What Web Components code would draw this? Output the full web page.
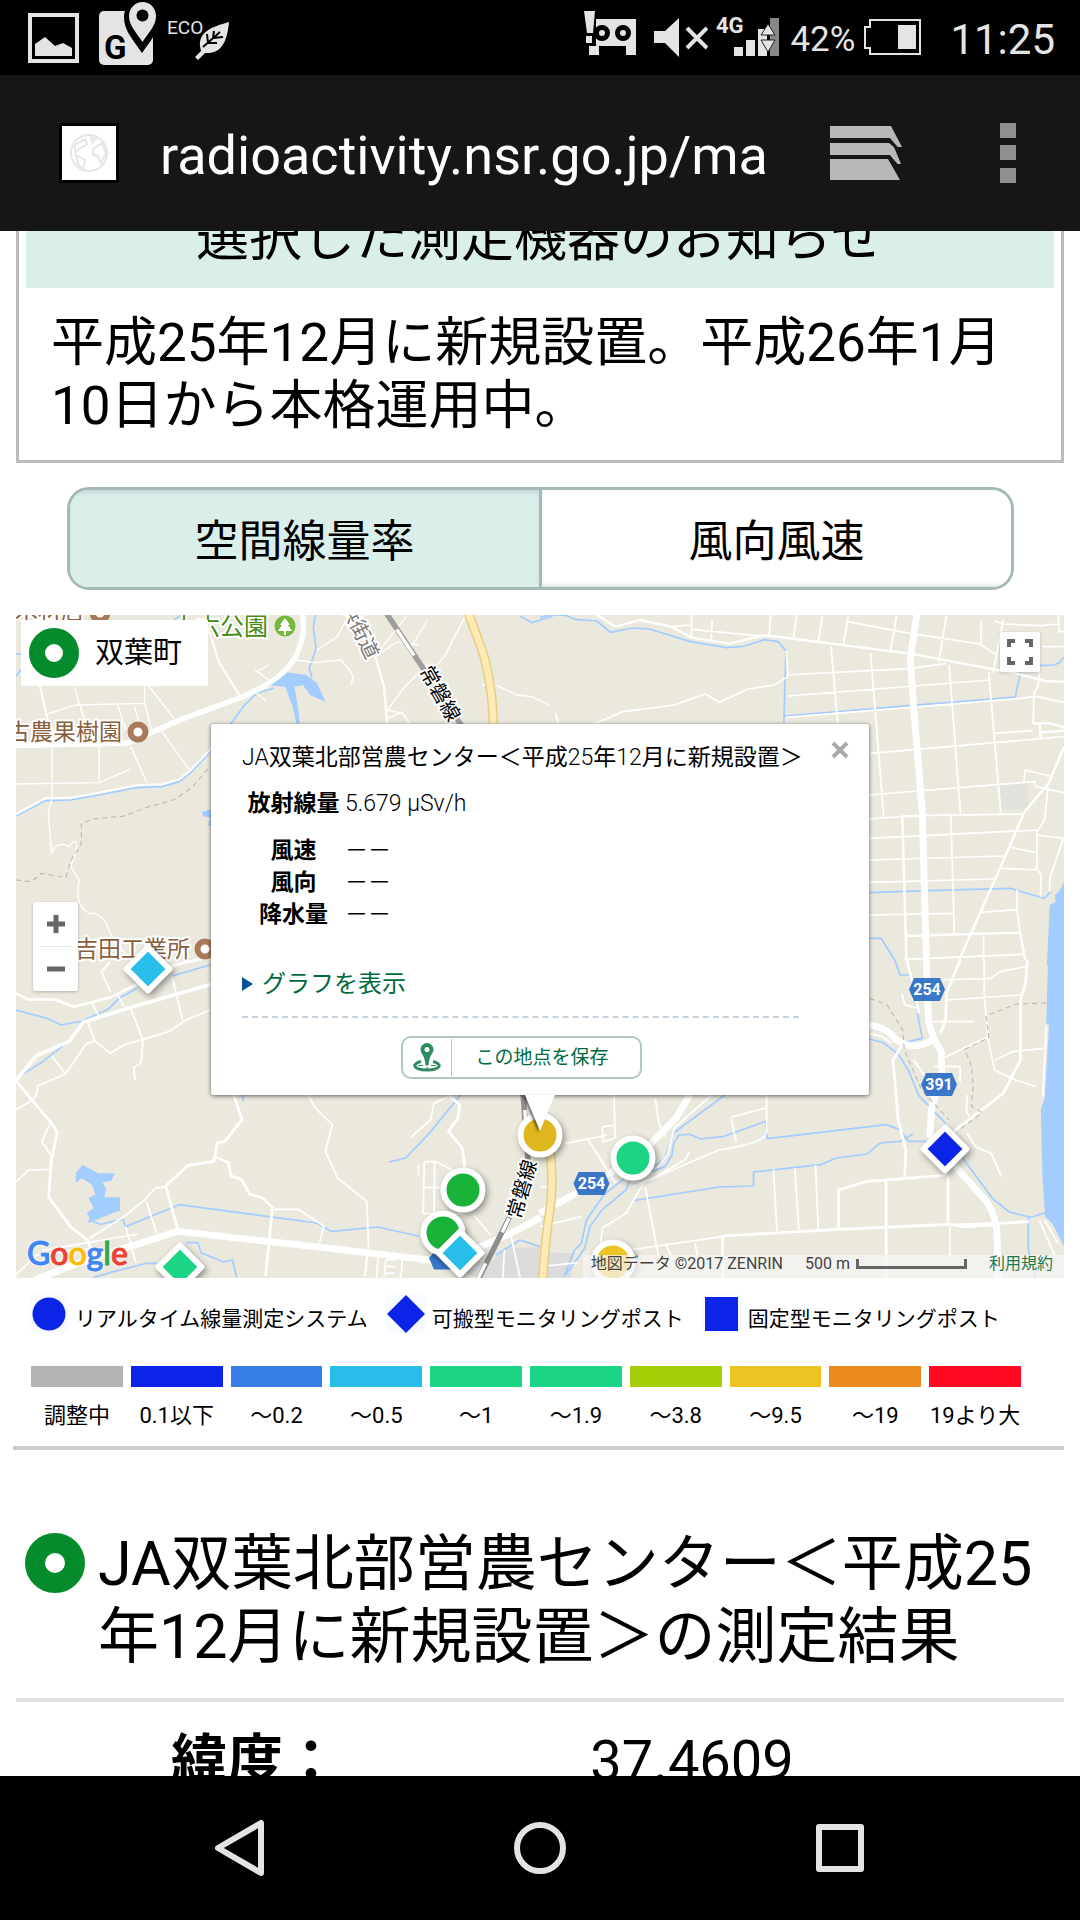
<!DOCTYPE html>
<html lang="ja">
<head>
<meta charset="utf-8">
<meta name="viewport" content="width=device-width, initial-scale=1">
<title>radioactivity.nsr.go.jp</title>
<style>
    html, body {
        margin: 0;
        height: 100%;
    }

    body {
        display: flex;
        flex-direction: column;
        overflow: hidden;
        background: #fff;
        color: #000;
        font-family: Roboto, "Noto Sans CJK JP", sans-serif;
    }

    main {
        flex: 1;
        min-height: 0;
        overflow: hidden;
    }

    .page {
        margin-top: -53px;
        padding: 0 16px;
    }
</style>
</head>
<body>
    <status-bar></status-bar>
    <browser-bar>radioactivity.nsr.go.jp/ma</browser-bar>
    <main>
        <div class="page">
            <notice-box>
                <span slot="title">選択した測定機器のお知らせ</span>
                平成25年12月に新規設置。平成26年1月10日から本格運用中。
            </notice-box>
            <view-tabs></view-tabs>
            <dose-map>
                <map-pin shape="circle" color="#ecc424" slot="pins" style="--x: 73px; --y: 647px"></map-pin>
                <map-pin shape="circle" color="#deb620" slot="pins" style="--x: 0px; --y: 520px"></map-pin>
                <map-pin shape="circle" color="#1bd584" slot="pins" style="--x: 93px; --y: 543px"></map-pin>
                <map-pin shape="circle" color="#1ab33a" slot="pins" style="--x: -77px; --y: 575px"></map-pin>
                <map-pin shape="circle" color="#1ab33a" slot="pins" style="--x: -97px; --y: 618px"></map-pin>
                <map-pin shape="diamond" color="#27bfea" slot="pins" style="--x: -80px; --y: 638px"></map-pin>
                <map-pin shape="diamond" color="#27bfea" slot="pins" style="--x: -392px; --y: 354px"></map-pin>
                <map-pin shape="diamond" color="#1bd584" slot="pins" style="--x: -360px; --y: 652px"></map-pin>
                <map-pin shape="diamond" color="#0c24e6" slot="pins" style="--x: 405px; --y: 534px"></map-pin>
                <map-popup slot="popup">JA双葉北部営農センター＜平成25年12月に新規設置＞</map-popup>
            </dose-map>
            <map-legend></map-legend>
            <station-heading>JA双葉北部営農センター＜平成25年12月に新規設置＞の測定結果</station-heading>
            <station-facts></station-facts>
        </div>
    </main>
    <nav-bar></nav-bar>

<script>
class StatusBar extends HTMLElement {
    constructor() {
        super();
        this.attachShadow({ mode: 'open' });
        this.shadowRoot.innerHTML = `
            <style>
                :host {
                    display: flex;
                    justify-content: space-between;
                    height: 75px;
                    padding: 0 25px 0 28px;
                    background: #000;
                    color: #e4e4e4;
                    flex: none;
                }

                .side {
                    display: flex;
                    align-items: center;
                }

                svg { display: block; fill: #e4e4e4; }
                .left { gap: 12px; }
                .gallery { margin-right: 8px; }
                .mute { margin: 0 8px 0 18px; }
                .percent { font-size: 35px; margin: 4px 8px 0 11px; }
                .clock { font-size: 42px; margin: 4px 0 0 29px; }
                text { font-family: Roboto, sans-serif; }
            </style>
            <div class="side left">
                <svg class="gallery" width="51" height="75" viewBox="28 0 51 75">
                    <rect x="30" y="15" width="47" height="46" fill="none" stroke="#e4e4e4" stroke-width="4"/>
                    <path d="M35 56V44l10-7 10 9 8-3 9 5v8z"/>
                </svg>
                <svg width="57" height="75" viewBox="99 0 57 75">
                    <rect x="99" y="11" width="54" height="54" rx="5"/>
                    <path d="M142-2c-10 0-18 9-18 19 0 12 6 19 18 36 12-17 18-24 18-36 0-10-8-19-18-19z" fill="#000"/>
                    <path d="M142.500 2c-7 0-13.500 6-13.500 14 0 9 6 15 13.500 26 7.500-11 13.500-17 13.500-26 0-8-6-14-13.500-14z"/>
                    <circle cx="142.500" cy="15.500" r="6" fill="#000"/>
                    <text x="104" y="59" font-size="33" font-weight="700" fill="#000">G</text>
                </svg>
                <svg width="62" height="75" viewBox="168 0 62 75">
                    <text x="167" y="34" font-size="19">ECO</text>
                    <path d="M229 22c-18 5-30 10-29 24l1 5-6 6 3 3 7-7c16 1 22-10 24-31z"/>
                    <path d="M203 47l17-15M208 43l-1-9M213 38l1-7M208 43l9 0M213 38l10-1" fill="none" stroke="#000" stroke-width="2"/>
                </svg>
            </div>
            <div class="side">
                <svg width="52" height="75" viewBox="584 0 52 75">
                    <path d="M584 11h11l-2 22h-6zM586 36h6v7h-6zM596 19h40v36h-10v-9h-27v9h-10v-9h7z"/>
                    <circle cx="602" cy="33" r="5.500" stroke="#000" stroke-width="5"/>
                    <circle cx="623" cy="33" r="5.500" stroke="#000" stroke-width="5"/>
                </svg>
                <svg class="mute" width="54" height="75" viewBox="655 0 54 75">
                    <path d="M655 31h11l14-13v39l-14-14h-11z"/>
                    <path d="M688 28l20 20M708 28l-20 20" stroke="#e4e4e4" stroke-width="4"/>
                </svg>
                <svg width="63" height="75" viewBox="717 0 63 75">
                    <text x="717" y="33" font-size="22" font-weight="700">4G</text>
                    <path d="M735 47h9v9h-9zM747 40h9v16h-9zM759 29h9v27h-9z"/>
                    <path d="M771 18h9v38h-9z" fill="#888"/>
                    <path d="M769 24l7 11h-14zM769 52l7-12h-14z" stroke="#222" stroke-width="1"/>
                </svg>
                <span class="percent">42%</span>
                <svg width="58" height="75" viewBox="864 0 58 75">
                    <path d="M871 20h50v34h-50v-6h-5V27h5z" fill="none" stroke="#e4e4e4" stroke-width="2"/>
                    <path d="M899 25h18v24h-18z"/>
                </svg>
                <span class="clock">11:25</span>
            </div>
        `;
    }
}

class BrowserBar extends HTMLElement {
    constructor() {
        super();
        this.attachShadow({ mode: 'open' });
        this.shadowRoot.innerHTML = `
            <style>
                :host {
                    display: flex;
                    align-items: center;
                    height: 156px;
                    padding: 0 64px 0 59px;
                    box-sizing: border-box;
                    background: #161616;
                    color: #fff;
                    flex: none;
                }

                .favicon {
                    width: 54px;
                    height: 54px;
                    border: 3px solid #000;
                    background: #fff;
                }

                .url {
                    flex: 1;
                    min-width: 0;
                    margin-left: 41px;
                    padding-top: 4px;
                    font-size: 54px;
                    white-space: nowrap;
                    overflow: hidden;
                }

                button {
                    padding: 0;
                    border: 0;
                    background: none;
                }

                .menu { margin-left: 98px; }
                svg { display: block; }
            </style>
            <svg class="favicon" viewBox="0 0 54 54">
                <g fill="none" stroke="#e6e6e6" stroke-width="2">
                    <circle cx="27" cy="27" r="18"/>
                    <path d="M13 19l10-6 2 5-8 5-4 4zM29 11l5 2-4 4zM14 29l9 5-2 10-5-6zM31 23l9-6 4 11-5 9-3-7-5-1z"/>
                </g>
            </svg>
            <div class="url"><slot></slot></div>
            <button aria-label="タブ">
                <svg width="72" height="56" viewBox="829 126 72 56" fill="#b8b8b8">
                    <path d="M829 127h61l11 21h-6l-6-9h-60zM829 144h59l5 4 7 17h-6l-5-9h-60zM829 160h58l12 21h-70z"/>
                    <path d="M829 141.500h60l8 9" fill="none" stroke="#161616" stroke-width="3"/>
                    <path d="M829 157.500h59l8 9" fill="none" stroke="#161616" stroke-width="3"/>
                </svg>
            </button>
            <button class="menu" aria-label="メニュー">
                <svg width="16" height="60" fill="#8f8f8f">
                    <path d="M0 0h16v15H0zM0 22h16v15H0zM0 45h16v15H0z"/>
                </svg>
            </button>
        `;
    }
}

class NoticeBox extends HTMLElement {
    constructor() {
        super();
        this.attachShadow({ mode: 'open' });
        this.shadowRoot.innerHTML = `
            <style>
                :host {
                    display: block;
                    padding: 6px 7px 22px;
                    border: 3px solid #bbb;
                    font-size: 53px;
                    line-height: 63px;
                }

                h2 {
                    margin: 0;
                    padding: 20px 0 18px;
                    background: #dbefea;
                    text-align: center;
                    font-size: 53px;
                    font-weight: 400;
                }

                p {
                    margin: 0;
                    padding: 24px 25px 0;
                }
            </style>
            <h2><slot name="title"></slot></h2>
            <p><slot></slot></p>
        `;
    }
}

class ViewTabs extends HTMLElement {
    constructor() {
        super();
        this.attachShadow({ mode: 'open' });
        this.shadowRoot.innerHTML = `
            <style>
                :host {
                    display: flex;
                    margin: 24px 50px 25px 51px;
                    border: 3px solid #a5b9b7;
                    border-radius: 22px;
                    overflow: hidden;
                }

                button {
                    flex: 1;
                    height: 97px;
                    padding: 0 0 2px;
                    border: 0;
                    background: #fff;
                    color: #000;
                    font: inherit;
                    font-size: 44px;
                    box-shadow: inset 0 -4px 4px -2px #dde3e2;
                }

                button[aria-pressed="true"] {
                    background: #daeeea;
                    box-shadow: inset 0 4px 4px -1px #c4d8d4;
                    border-right: 3px solid #a5b9b7;
                }
            </style>
            <button aria-pressed="true">空間線量率</button>
            <button aria-pressed="false">風向風速</button>
        `;
    }
}

class MapPin extends HTMLElement {
    constructor() {
        super();
        this.attachShadow({ mode: 'open' });
    }

    connectedCallback() {
        const color = this.getAttribute('color');
        const shape = this.getAttribute('shape') === 'circle'
            ? `<circle cx="30" cy="30" r="19.500"/>`
            : `<path d="M30 8.500L51.500 30 30 51.500 8.500 30z"/>`;
        this.shadowRoot.innerHTML = `
            <style>
                :host {
                    position: absolute;
                    left: calc(50% + var(--x) - 30px);
                    top: calc(var(--y) - 30px);
                }

                svg {
                    display: block;
                    filter: drop-shadow(2px 3px 3px rgba(0, 0, 0, 0.4));
                }
            </style>
            <svg width="60" height="60" fill="${color}" stroke="#fff" stroke-width="6" stroke-linejoin="round">${shape}</svg>
        `;
    }
}

class MapPopup extends HTMLElement {
    constructor() {
        super();
        this.attachShadow({ mode: 'open' });
        this.shadowRoot.innerHTML = `
            <style>
                :host {
                    position: absolute;
                    left: calc(50% - 329px);
                    top: 109px;
                    width: 658px;
                    box-sizing: border-box;
                    padding: 18px 70px 16px 31px;
                    background: #fff;
                    border-radius: 3px;
                    box-shadow: 0 1px 4px rgba(0, 0, 0, 0.6);
                    font-family: "Roboto Light", Roboto, "Noto Sans CJK JP", sans-serif;
                    font-size: 23px;
                    line-height: 32px;
                }

                .title { white-space: nowrap; }

                table {
                    margin-top: 14px;
                    border-collapse: collapse;
                }

                th {
                    width: 103px;
                    padding: 0;
                    font-weight: 700;
                    text-align: center;
                }

                td { padding: 0; }
                tr:first-child > * { padding-bottom: 15px; }

                .graph {
                    display: flex;
                    align-items: center;
                    gap: 9px;
                    padding: 37px 0 16px;
                    border-bottom: 2px dashed #c5d2dc;
                    color: #006b3c;
                    font-size: 24px;
                    text-decoration: none;
                }

                .save {
                    display: flex;
                    align-items: center;
                    width: 241px;
                    height: 43px;
                    margin: 18px 0 0 159px;
                    padding: 0;
                    border: 2px solid #b0c8c4;
                    border-radius: 10px;
                    background: #fff;
                    color: #006b3c;
                    font: inherit;
                    font-size: 19px;
                }

                .save svg {
                    border-right: 1px solid #b0c8c4;
                }

                .save span {
                    flex: 1;
                    padding-right: 8px;
                }

                .close {
                    position: absolute;
                    top: 16px;
                    right: 19px;
                    padding: 0;
                    border: 0;
                    background: none;
                }

                .tail {
                    position: absolute;
                    left: 314px;
                    top: 100%;
                    filter: drop-shadow(-2px 1px 1px rgba(0, 0, 0, 0.5));
                }

                svg { display: block; }
            </style>
            <div class="title"><slot></slot></div>
            <table>
                <tr><th scope="row">放射線量</th><td>5.679 μSv/h</td></tr>
                <tr><th scope="row">風速</th><td>－－</td></tr>
                <tr><th scope="row">風向</th><td>－－</td></tr>
                <tr><th scope="row">降水量</th><td>－－</td></tr>
            </table>
            <a class="graph" href="#graph">
                <svg width="11" height="14"><path d="M0 0l11 7-11 7z" fill="#0b4f9e"/></svg>
                グラフを表示
            </a>
            <button class="save">
                <svg width="48" height="37" viewBox="0 0 48 37">
                    <path d="M24 4a6.500 6.500 0 0 0-6.500 6.500c0 4 4.500 6 5 16h3c.5-10 5-12 5-16A6.500 6.500 0 0 0 24 4zm0 4a2.500 2.500 0 1 1 0 5 2.500 2.500 0 0 1 0-5z" fill="#2f8c60" fill-rule="evenodd"/>
                    <g fill="none" stroke="#2f8c60">
                        <path d="M18 22.500c-9 2-9 8 6 8.500 15-.5 15-6.500 6-8.500" stroke-width="3"/>
                        <path d="M15 26.500h5M28 26.500h5M24 28v3" stroke-width="1"/>
                    </g>
                </svg>
                <span>この地点を保存</span>
            </button>
            <button class="close" aria-label="閉じる">
                <svg width="20" height="20"><path d="M3 3l14 14M17 3L3 17" stroke="#aaa" stroke-width="4"/></svg>
            </button>
            <svg class="tail" width="30" height="36"><path d="M0 0h30L15 36z" fill="#fff"/></svg>
        `;
    }
}

class DoseMap extends HTMLElement {
    constructor() {
        super();
        this.attachShadow({ mode: 'open' });
        this.shadowRoot.innerHTML = `
            <style>
                :host {
                    display: block;
                    position: relative;
                    height: 663px;
                    overflow: hidden;
                    background: #ebe9de;
                }

                .ground {
                    display: block;
                    width: 100%;
                    height: 100%;
                }

                .ground text {
                    font-size: 23px;
                    stroke: #fff;
                    stroke-width: 4px;
                    stroke-linejoin: round;
                    paint-order: stroke;
                }

                .ground .shield text {
                    font-size: 16px;
                    font-weight: 700;
                    fill: #fff;
                    stroke: none;
                    text-anchor: middle;
                }

                .road { fill: none; stroke: #fff; stroke-linejoin: round; }
                .water { fill: none; stroke: #a3ccff; stroke-width: 5; stroke-linejoin: round; }
                .lake { fill: #a3ccff; }
                .trail { fill: none; stroke: #bbb3a8; stroke-width: 3; stroke-dasharray: 15 11; }

                .area, .zoom, .full, .google, .credits {
                    position: absolute;
                }

                .area {
                    left: 5px;
                    top: 5px;
                    display: flex;
                    align-items: center;
                    gap: 16px;
                    height: 66px;
                    padding: 0 26px 0 8px;
                    background: #fff;
                    font-size: 29px;
                    line-height: 62px;
                }

                .zoom {
                    left: 17px;
                    top: 287px;
                    width: 45px;
                    background: #fff;
                    border-radius: 2px;
                    box-shadow: 0 1px 3px rgba(0, 0, 0, 0.25);
                }

                .zoom button, .full {
                    display: flex;
                    align-items: center;
                    justify-content: center;
                    width: 100%;
                    height: 44px;
                    padding: 0;
                    border: 0;
                    background: none;
                }

                .zoom hr {
                    height: 1px;
                    margin: 0 7px;
                    border: 0;
                    background: #e6e6e6;
                }

                .full {
                    right: 24px;
                    top: 17px;
                    width: 40px;
                    height: 40px;
                    background: #fff;
                    box-shadow: 0 1px 3px rgba(0, 0, 0, 0.2);
                }

                .google {
                    left: 11px;
                    bottom: 5px;
                    font: 500 32px/40px Lato, sans-serif;
                    -webkit-text-stroke: 1px;
                    text-shadow: 0 0 3px #fff, 0 0 3px #fff;
                }

                .credits {
                    right: 0;
                    bottom: 0;
                    display: flex;
                    align-items: center;
                    gap: 22px;
                    height: 23px;
                    box-sizing: border-box;
                    padding: 0 11px 5px 8px;
                    background: rgba(245, 245, 245, 0.72);
                    color: #444;
                    font-size: 16px;
                    line-height: 18px;
                }

                .scale { display: flex; align-items: center; gap: 6px; }
                .scale i { width: 105px; height: 7px; border: 3px solid #666; border-top: 0; }
                .credits a { color: #1d7a4b; text-decoration: none; }
            </style>
            <svg class="ground" viewBox="16 615 1048 663" preserveAspectRatio="xMidYMid slice">
                <!-- north west -->
                <g transform="translate(0 600) scale(0.3444 0.3333)">
                    <path class="lake" d="M775 255l45-40 70 10 30 25 25 55-45-20-20-30-25 5 10 60 5 50h-10l-10-50-22-60zM586 635l30-8v55l-12-8 8-20-22-5z"/>
                    <path class="water" d="M46 648l85-46 75-2 80-15 110-22 75-3 50-15 30-25 65-70M795 265l-50 15-35 35-42 60M46 230l20-30M46 162h20M915 45l-5 40 8 60-20 60 8 30M480 80l45-35M1510 48l35 20 60-20"/>
                    <g class="road">
                        <path stroke-width="16" d="M46 437l325-8 65-30 100-45 160-60q120-50 160-120 35-70 22-130"/>
                        <path stroke-width="6" d="M695 285l-60-100-30-100M115 255l25 110 13 75M1090 170l25 90 10 120M1090 170l-20-90M46 643l85-48 75-2 80-15 110-22 75-3 50-15 30-25 65-70"/>
                        <path stroke-width="4" d="M150 440l2 150-12 50 10 120q15-40 50-20 30-40 20 20l-15 40 25 40q-15 80 30 100 40-5 60 60l55 80M46 552l242-4V435M288 548l90-40M380 440l45 105M470 395l80 115M130 345l90-30 200-5v-90M215 260l30 100M340 310l25 80M420 310l20 80M390 320l15 50M430 255l75 100M445 260l60-25 80-15M745 280l30 25M740 210l40 30M745 215l35-20M855 180l60 8 75-8 25 30 10 20-5 25M1125 330l50-70 70-70M1125 330l45 10 22 35M1125 355l45-20M1400 255l50 5 50 25 45 5 50 25M1095 165l60-40 60 10M920 150l60-40 30-60M1180 50l-70 90M1240 60l-50 90M1350 50l-60 120-70 80"/>
                    </g>
                    <path class="trail" d="M46 840l45 5 30-25 70 12 15-50 30-50v-60l30-15 90-8 80-30 70-20 50-35 50-60"/>
                    <path fill="none" stroke="#9e9e9e" stroke-width="16" d="M1122 40l220 340"/>
                    <path fill="none" stroke="#fff" stroke-width="10" d="M1152 88l50 78"/>
                    <path fill="none" stroke="#e5ce85" stroke-width="28" d="M1360 40l40 110q30 100 33 235"/>
                    <path fill="none" stroke="#ffeab5" stroke-width="19" d="M1360 40l40 110q30 100 33 235"/>
                </g>
                <!-- north east -->
                <g transform="translate(540 600) scale(0.3444 0.3333)">
                    <path class="lake" d="M1568 800l-46 45-12 25-15 15 2 20-17 10-8 180h96z"/>
                    <path fill="#e2e2dc" d="M1335 555l80-5 3 80-80-4z"/>
                    <path class="water" d="M0 52l30-8 45 2 25 12 65 5 40 34 62-13 50 3 120 38 105 18 50-4 60-20 40 6 22 28-6 215M710 348l370-32 300-25 15-75M1452 197l40-2 15-6 25-30M955 878l170-6 240-7 100 30 20-22M955 1015h35l40 65"/>
                    <g class="road">
                        <path stroke-width="20" d="M1095 40l-20 135 10 150 25 310 12 445"/>
                        <path stroke-width="7" d="M160 42l60 38 70-20 90 20 60 33 110 18 100-25 45 5 380 50 310 60 80 22 55 2"/>
                        <path stroke-width="7" d="M1522 440l-45 110-70 85-80 190-110 255M1110 647l-58 3 12 430M1064 1008l330-10 15 82M1430 370h50l42 12M1450 370l4 45M1454 397l70-5"/>
                        <path stroke-width="5" d="M715 152l5 78-40 25-75 12-85 40-40-25-90 33-150 20-90 40M715 225l365-20 100-15M720 288l585-48M715 352l365-30 300-25 60-8 80 18M440 45v65l-60-30M440 75l-60 5M500 62l-3 60M440 88l200 20M670 45l-5 65M745 45l-10 75M820 48l-12 80M895 48l-15 90M1035 48l-18 110M1180 48l-22 140M893 65l180 35 205 32 43 30M1282 60l-2 70M1320 62l25 10 110 5 50-5M1460 140h60M1505 45l2 50h15M1345 60l-30 160M1450 200l-4 60-12 20-2 90M845 140l20 235M960 160l38 490M1188 195l33 448M1303 215l35 425M960 460l560-50M955 585l480-40 5 15 80 18M955 657l130-10 320-5M955 715l490-25M955 780l390-12M955 847l365-10M955 945l245-5M1193 647l10 355M1340 805l100 5v-10l15 25-2 65M1475 560l-10 100-22 35v110M1445 705l75 10-40 120v40M1360 740l80 18M1280 937l105-8M1385 870v60l10 68M1055 1078l350-15M1288 1005v75M1405 545l4-35 72 18M1320 400l110-8M45 340l10 40"/>
                    </g>
                </g>
                <!-- south west -->
                <g transform="translate(0 960) scale(0.3444 0.3333)">
                    <path fill="#dcdcdc" d="M1265 905l120 48h183V862l-100 2-40 40-160 10z"/>
                    <path class="lake" d="M240 615l45 25 48 0-10 22-25 5 10 20-5 25 45 0v40l-28 10-50 22-15 5 5-15-8-15 20-15-15-30 20-10-10-30-30-20-17 15v-30z"/>
                    <path class="water" d="M46 150l90 25 42 20 60-12 75-35 35-35 50-28M500 48l115-35M238 183l-38 60-80 65-74 48M270 785l22 8 65-15 8 22 155-66 400 55 42 25 135-13 120 28M705 404v20M1338 404l-95 120-65 70-48 12M270 953l60-18 95-25h30M540 848h35l8 30 67 28 25-6 12 53M1440 885l70-45 58 20"/>
                    <g class="road">
                        <path stroke-width="20" d="M100 960l120-48 180-60 115-38 400 46 345 42q130-25 310-130"/>
                        <path stroke-width="11" d="M46 362l60-75 95-43 40-57 140-45 235-70"/>
                        <path stroke-width="8" d="M46 100l35 18h75l60 22 110-30 180-95 110-25M46 362l105 130 15 25-17 85-8 110 65 90 50 40 10 35M678 404l25 75-50 65-22 5-10 55-75 12-65 62 35 130M625 590l38 18 8 40 30 10 25 45 35 10 30 30-20 205M1300 404l35 30-5 40-28 40 40 50 8 60"/>
                        <path stroke-width="5" d="M255 187l20 55 45 38 40-25 130-40 50-35 70-30M275 242l-25 10-60 90-80 35-5 30-20 20-39 22M380 148l35 90-5 70-22 15 4 37M150 287l42 57M500 50l30 130M268 130l20 40M340 100l20 40M320 5l-25 30 25 60M150 480l-28 65 25 40M145 628l-60 2-39 35M480 680l-30 5-30 35-60 50-100 65M425 725l30 95M365 800l30 110M120 872l280-50M46 945l60-60 160-20M895 404l20 40 50 50-20 80 35 80 85 70 5 130-8 80M795 748h70l75 50-12 50M1300 410l-40 20-10 50-45 40-10 15M1232 605l-3 155 115 2M1232 605h35l45 25M1215 615v32M1262 605l-2 155M1230 683h60M1375 765l50 60M1065 890l-5 60M1098 893l-5 60M1168 895l-4 58M1120 900l-4 50M1120 900h30M1118 920h30M1116 940h30M1480 810l30 143M1465 870l-5 83"/>
                    </g>
                    <path fill="none" stroke="#8e8e8e" stroke-width="16" d="M1519 404l16 220M1480 770l-92 190"/>
                    <path fill="none" stroke="#fff" stroke-width="10" d="M1524 450l4 70M1478 775l-20 42M1410 910l-22 46"/>
                </g>
                <!-- south east -->
                <g transform="translate(540 960) scale(0.3444 0.3333)">
                    <path fill="#dcdcdc" d="M-10 875l110 5-10 73H-10z"/>
                    <path class="lake" d="M1475 0l-5 190 8 5-12 215-12 40 5 200 8 120 20 20 35 70h50V0z"/>
                    <path class="water" d="M1030 0l15 45h30l35 190-50 12M955 237l40 10 45 35 30 50 30 75 75 80 40 90 100 140 50 40 60 15 48-15M1418 770v100l22 85M538 404l-150 115-25 75-35 30M325 635l38-15 20-35 5-35 15-25 32-2 30 14 70-8 120-45 5 52 345-42 40 15 25 35h50M1083 522l-38 22-57 5-38 33-90 12-45 20-195 22v42l-100 3-245 40M260 660l-10 30-70 60-35 50-15 65-60 85M245 655l-60 50-50 75-15 70-20 20-30 80"/>
                    <g class="road">
                        <path stroke-width="20" d="M1122 0l6 185 15 50 22 40 2 60-30 110-5 80 45 60 60 70 60 70q30 50 30 100l4 130M955 195q50 5 80 45 50 35 105 0M435 404l-40 70-90 95-100 70-90 55-115 65"/>
                        <path stroke-width="8" d="M1065 0l15 60 20 100M1220 0l-40 100-2 80-15 40M1415 0l-5 70-15 50v180l-50 100-150 120M1055 250l-30 50 15 180 22 90-3 80M1185 645l-240 20-78 25v120M1005 660v290M1185 650v145l145-5 90-5M530 953V828l340-20 315-15M1185 793l50 8 95-8"/>
                        <path stroke-width="5" d="M1160 60l150-5 25-20 75-15M1180 120l220-15M1140 185h120M1290 0v100l10 130 20 100 60 30 60 20M1322 300l50-25 90-10M1170 295l130-65M1145 320h75v45M1050 100l10 35 40 10M955 220l40 10 25 20M1085 300l40 60 20 80M1240 405l-2 50 10 15M1240 520l25 40 45 20 30 70M1470 195l-10 215M75 550l120-25M215 404l3 130-35 12-2-45 35-5M335 415l10 75 20 40M140 540l80 130M0 800l120-30M0 680h25M500 404l-110 100-20 80-30 40M270 680l250-110q120-20 135-45M658 404v118M555 475l15 72M555 472l100-28M435 575l-15 25-100 60M300 670l-50 90-70 45M305 680l45 240M260 870l270-40M180 810l-5 60M678 628l10 185M740 624l12 190M800 615l8 195M365 850l20 50M450 850l10 50M0 920l110-12M1190 800v100M1465 780l40 70M1450 780l50 120"/>
                    </g>
                    <path class="trail" d="M958 115l50 20 45 75 5 60 50 120 80 90M1470 128l-90 5-85 35 8 65-70 35 20 50 5 60-5 60 30 20-70 55"/>
                    <path fill="none" stroke="#e5ce85" stroke-width="28" d="M28 560q15 120-5 230-10 80-15 170"/>
                    <path fill="none" stroke="#ffeab5" stroke-width="19" d="M28 560q15 120-5 230-10 80-15 170"/>
                </g>

                <text x="441" y="693" transform="rotate(60 441 693)" text-anchor="middle" dy="8" style="font-size: 20px">常磐線</text>
                <text x="521" y="1189" transform="rotate(-74 521 1189)" text-anchor="middle" dy="8" style="font-size: 20px">常磐線</text>
                <text x="361" y="630" transform="rotate(64 361 630)" text-anchor="middle" dy="8" fill="#777" style="font-size: 20px">浜街道</text>
                <g fill="#8b5e3c">
                    <text x="84" y="619" text-anchor="end">木材店</text>
                    <text x="122" y="740" text-anchor="end">古農果樹園</text>
                    <text x="190" y="957" text-anchor="end">吉田工業所</text>
                </g>
                <text x="268" y="635" text-anchor="end" fill="#458a14" style="font-size: 24px">大六公園</text>
                <g fill="#fff" stroke="#a87b5c" stroke-width="6">
                    <circle cx="100" cy="613" r="7.500"/>
                    <circle cx="138" cy="732" r="7.500"/>
                    <circle cx="205" cy="949" r="7.500"/>
                </g>
                <circle cx="285" cy="626" r="10.500" fill="#76b83f"/>
                <path d="M285 618l5 7h-2l4 6h-6v4h-2v-4h-6l4-6h-2z" fill="#fff"/>
                <g class="shield" fill="#3a77c9">
                    <path d="M914 978h26l5 11.500-5 11.500h-26l-5-11.500zM926 1073h26l5 11.500-5 11.500h-26l-5-11.500zM578.500 1172h26l5 11.500-5 11.500h-26l-5-11.500zM434 1252h26l5 11.500-5 6h-26l-5-11.500z"/>
                    <text x="927" y="995">254</text>
                    <text x="939" y="1090">391</text>
                    <text x="591.500" y="1189">254</text>
                </g>
            </svg>
            <slot name="pins"></slot>
            <div class="google" aria-label="Google"><span style="color:#4285f4">G</span><span style="color:#ea4335">o</span><span style="color:#fbbc05">o</span><span style="color:#4285f4">g</span><span style="color:#34a853">l</span><span style="color:#ea4335">e</span></div>
            <div class="area">
                <svg width="50" height="50"><circle cx="25" cy="25" r="17" fill="none" stroke="#048c2c" stroke-width="16"/></svg>
                双葉町
            </div>
            <div class="zoom">
                <button aria-label="拡大"><svg width="18" height="18"><path d="M9 0v18M0 9h18" stroke="#666" stroke-width="5"/></svg></button>
                <hr>
                <button aria-label="縮小"><svg width="18" height="18"><path d="M0 9h18" stroke="#666" stroke-width="5"/></svg></button>
            </div>
            <button class="full" aria-label="全画面">
                <svg width="26" height="26"><path d="M2 8V2h6M18 2h6v6M24 18v6h-6M8 24H2v-6" fill="none" stroke="#666" stroke-width="4"/></svg>
            </button>
            <div class="credits">
                <span>地図データ ©2017 ZENRIN</span>
                <span class="scale">500 m <i></i></span>
                <a href="#terms">利用規約</a>
            </div>
            <slot name="popup"></slot>
        `;
    }
}

const LEVELS = [
    ['調整中', '#b4b4b4'],
    ['0.1以下', '#0c24e6'],
    ['～0.2', '#377de8'],
    ['～0.5', '#27bfea'],
    ['～1', '#1bd584'],
    ['～1.9', '#1bd584'],
    ['～3.8', '#a5ce08'],
    ['～9.5', '#ecc424'],
    ['～19', '#ed8a1e'],
    ['19より大', '#ff0a22']
];

class MapLegend extends HTMLElement {
    constructor() {
        super();
        this.attachShadow({ mode: 'open' });
        this.shadowRoot.innerHTML = `
            <style>
                :host {
                    display: block;
                    margin-left: -3px;
                    padding: 16px 0 14px 16px;
                    border-bottom: 4px solid #ccc;
                }

                .types {
                    display: flex;
                    gap: 18px;
                    font-size: 21px;
                    line-height: 40px;
                }

                .types span {
                    display: flex;
                    gap: 6px;
                    padding-top: 5px;
                    white-space: nowrap;
                }

                .types svg {
                    fill: #0c24e6;
                    background: #f8fbff;
                    border-radius: 8px;
                    margin-top: -5px;
                }

                ul {
                    display: grid;
                    grid-template-columns: repeat(10, 1fr);
                    gap: 8px;
                    margin: 27px 43px 0 2px;
                    padding: 0;
                    list-style: none;
                    font-size: 22px;
                    line-height: 32px;
                    text-align: center;
                    white-space: nowrap;
                }

                i {
                    display: block;
                    height: 21px;
                    margin-bottom: 13px;
                }
            </style>
            <div class="types">
                <span><svg width="40" height="40"><circle cx="20" cy="20" r="16.500"/></svg>リアルタイム線量測定システム</span>
                <span><svg width="40" height="40"><path d="M20 1l19 19-19 19L1 20z"/></svg>可搬型モニタリングポスト</span>
                <span><svg width="40" height="40"><path d="M3 3h33v34H3z"/></svg>固定型モニタリングポスト</span>
            </div>
            <ul>${LEVELS.map(([label, color]) => `<li><i style="background:${color}"></i>${label}</li>`).join('')}</ul>
        `;
    }
}

class StationHeading extends HTMLElement {
    constructor() {
        super();
        this.attachShadow({ mode: 'open' });
        this.shadowRoot.innerHTML = `
            <style>
                :host {
                    display: flex;
                    gap: 13px;
                    padding: 78px 0 24px 9px;
                    border-bottom: 4px solid #dfe2e5;
                }

                svg {
                    flex: none;
                    margin-top: 5px;
                }

                h1 {
                    margin: 0;
                    font-size: 61px;
                    font-weight: 400;
                    line-height: 73px;
                }
            </style>
            <svg width="60" height="60"><circle cx="30" cy="30" r="20" fill="none" stroke="#048c2c" stroke-width="20"/></svg>
            <h1><slot></slot></h1>
        `;
    }
}

class StationFacts extends HTMLElement {
    constructor() {
        super();
        this.attachShadow({ mode: 'open' });
        this.shadowRoot.innerHTML = `
            <style>
                :host { display: block; }

                table {
                    width: 100%;
                    border-collapse: collapse;
                    table-layout: fixed;
                    font-size: 56px;
                    line-height: 66px;
                }

                th, td {
                    padding: 26px 0;
                    text-align: left;
                }

                th { width: 40%; padding-left: 155px; }
            </style>
            <table>
                <tr><th scope="row">緯度：</th><td>37.4609</td></tr>
            </table>
        `;
    }
}

class NavBar extends HTMLElement {
    constructor() {
        super();
        this.attachShadow({ mode: 'open' });
        this.shadowRoot.innerHTML = `
            <style>
                :host {
                    display: flex;
                    align-items: center;
                    justify-content: center;
                    gap: 200px;
                    height: 144px;
                    background: #000;
                    flex: none;
                }

                button {
                    width: 100px;
                    padding: 0 20px;
                    border: 0;
                    background: none;
                }

                svg {
                    display: block;
                    fill: none;
                    stroke: #e3e3e3;
                    stroke-width: 6;
                    stroke-linejoin: round;
                }
            </style>
            <button aria-label="戻る"><svg width="60" height="60"><path d="M51 5v50L8 30z"/></svg></button>
            <button aria-label="ホーム"><svg width="60" height="60"><circle cx="30" cy="30" r="23"/></svg></button>
            <button aria-label="履歴"><svg width="60" height="60"><path d="M9 9h42v42H9z"/></svg></button>
        `;
    }
}

customElements.define('status-bar', StatusBar);
customElements.define('browser-bar', BrowserBar);
customElements.define('notice-box', NoticeBox);
customElements.define('view-tabs', ViewTabs);
customElements.define('map-pin', MapPin);
customElements.define('map-popup', MapPopup);
customElements.define('dose-map', DoseMap);
customElements.define('map-legend', MapLegend);
customElements.define('station-heading', StationHeading);
customElements.define('station-facts', StationFacts);
customElements.define('nav-bar', NavBar);
</script>
</body>
</html>
